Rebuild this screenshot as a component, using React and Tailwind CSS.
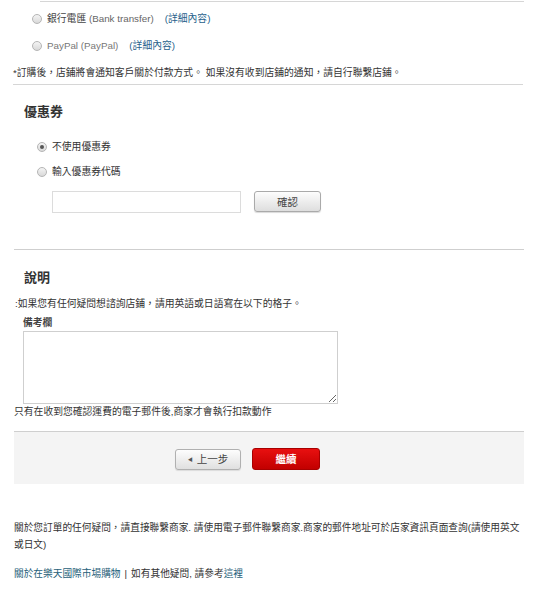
import React from "react";

const font = {
  fontFamily: "'Liberation Sans', 'Noto Sans CJK TC', Arial, sans-serif",
};

function Radio({ checked }) {
  return (
    <span className="relative inline-flex w-[10px] h-[10px] shrink-0 rounded-full border border-[#b5b5b5] bg-gradient-to-b from-[#f4f4f4] to-[#d9d9d9] items-center justify-center">
      {checked && <span className="w-[4px] h-[4px] rounded-full bg-[#555]" />}
    </span>
  );
}

export default function App() {
  return (
    <div className="w-[537px] h-[600px] bg-white text-[#333] text-[9.8px] leading-none" style={font}>
      {/* payment box bottom */}
      <div className="ml-[40px] w-[484px] h-[2px] border-b border-[#d6d6d6]" />

      <div className="pl-[32px] pt-[12px] flex flex-col gap-[17px]">
        <div className="flex items-center gap-[5px] h-[10px]">
          <Radio />
          <span className="text-[#444]">銀行電匯 <span className="text-[#666]">(Bank transfer)</span></span>
          <a className="ml-[6px] text-[#1f5f8b]">(詳細內容)</a>
        </div>
        <div className="flex items-center gap-[5px] h-[10px]">
          <Radio />
          <span className="text-[#777]">PayPal (PayPal)</span>
          <a className="ml-[6px] text-[#1f5f8b]">(詳細內容)</a>
        </div>
      </div>

      <div className="mt-[17px] ml-[13px] w-[510px] pb-[6px] border-b border-[#d6d6d6] text-[#333]">
        *訂購後，店鋪將會通知客戶關於付款方式。 如果沒有收到店鋪的通知，請自行聯繫店鋪。
      </div>

      {/* coupon */}
      <div className="ml-[14px] w-[510px] border-b border-[#cfcfcf] pb-[36px]">
        <h2 className="pl-[10px] pt-[20px] text-[13px] font-bold text-[#333]">優惠券</h2>
        <div className="pl-[23px] pt-[24px] flex flex-col gap-[15px]">
          <div className="flex items-center gap-[5px] h-[10px]">
            <Radio checked />
            <span>不使用優惠券</span>
          </div>
          <div className="flex items-center gap-[5px] h-[10px]">
            <Radio />
            <span>輸入優惠券代碼</span>
          </div>
        </div>
        <div className="pl-[38px] pt-[14px] flex items-center gap-[13px]">
          <input className="w-[189px] h-[22px] border border-[#dcdcdc] outline-none" />
          <button className="w-[67px] h-[21px] rounded-[3px] border border-[#aaa] bg-gradient-to-b from-[#fdfdfd] to-[#dedede] text-[10.5px] text-[#444] shadow-[0_1px_1px_rgba(0,0,0,0.15)]">
            確認
          </button>
        </div>
      </div>

      {/* notes */}
      <div className="ml-[14px] w-[510px]">
        <h2 className="pl-[10px] pt-[21px] text-[13px] font-bold text-[#333]">說明</h2>
        <p className="pt-[15px] pl-[1px]">:如果您有任何疑問想諮詢店鋪，請用英語或日語寫在以下的格子。</p>
        <p className="pt-[9px] pl-[9px] font-bold text-[#444]">備考欄</p>
        <textarea className="mt-[4px] ml-[9px] block w-[315px] h-[73px] border border-[#cfcfcf] outline-none resize-y" />
        <p className="pt-[3px] text-[#333]">只有在收到您確認運費的電子郵件後,商家才會執行扣款動作</p>
      </div>

      {/* nav panel */}
      <div className="mt-[14px] ml-[14px] w-[510px] h-[53px] bg-[#f4f4f4] border-t border-[#cfcfcf] flex items-center gap-[11px] pl-[161px] pt-[2px]">
        <button className="w-[66px] h-[21px] rounded-[3px] border border-[#b0b0b0] bg-gradient-to-b from-[#fdfdfd] to-[#e0e0e0] text-[10.5px] text-[#444] flex items-center justify-center gap-[4px] shadow-[0_1px_1px_rgba(0,0,0,0.1)]">
          <span className="text-[5px] text-[#555]">◀</span>
          <span>上一步</span>
        </button>
        <button className="w-[68px] h-[22px] rounded-[3px] border border-[#a80000] bg-gradient-to-b from-[#e81010] to-[#c20000] text-[10.5px] font-bold text-white">
          繼續
        </button>
      </div>

      {/* footer */}
      <div className="ml-[14px] w-[514px] pt-[35px] leading-[17px] text-[9.7px]">
        <p>
          關於您訂單的任何疑問，請直接聯繫商家. 請使用電子郵件聯繫商家.商家的郵件地址可於店家資訊頁面查詢(請使用英文或日文)
        </p>
        <p className="pt-[12px]">
          <a className="text-[#1f5f7a]">關於在樂天國際市場購物</a>
          <span className="mx-[4px]">|</span>
          <span>如有其他疑問, 請參考</span>
          <a className="text-[#1f5f7a]">這裡</a>
        </p>
      </div>
    </div>
  );
}
